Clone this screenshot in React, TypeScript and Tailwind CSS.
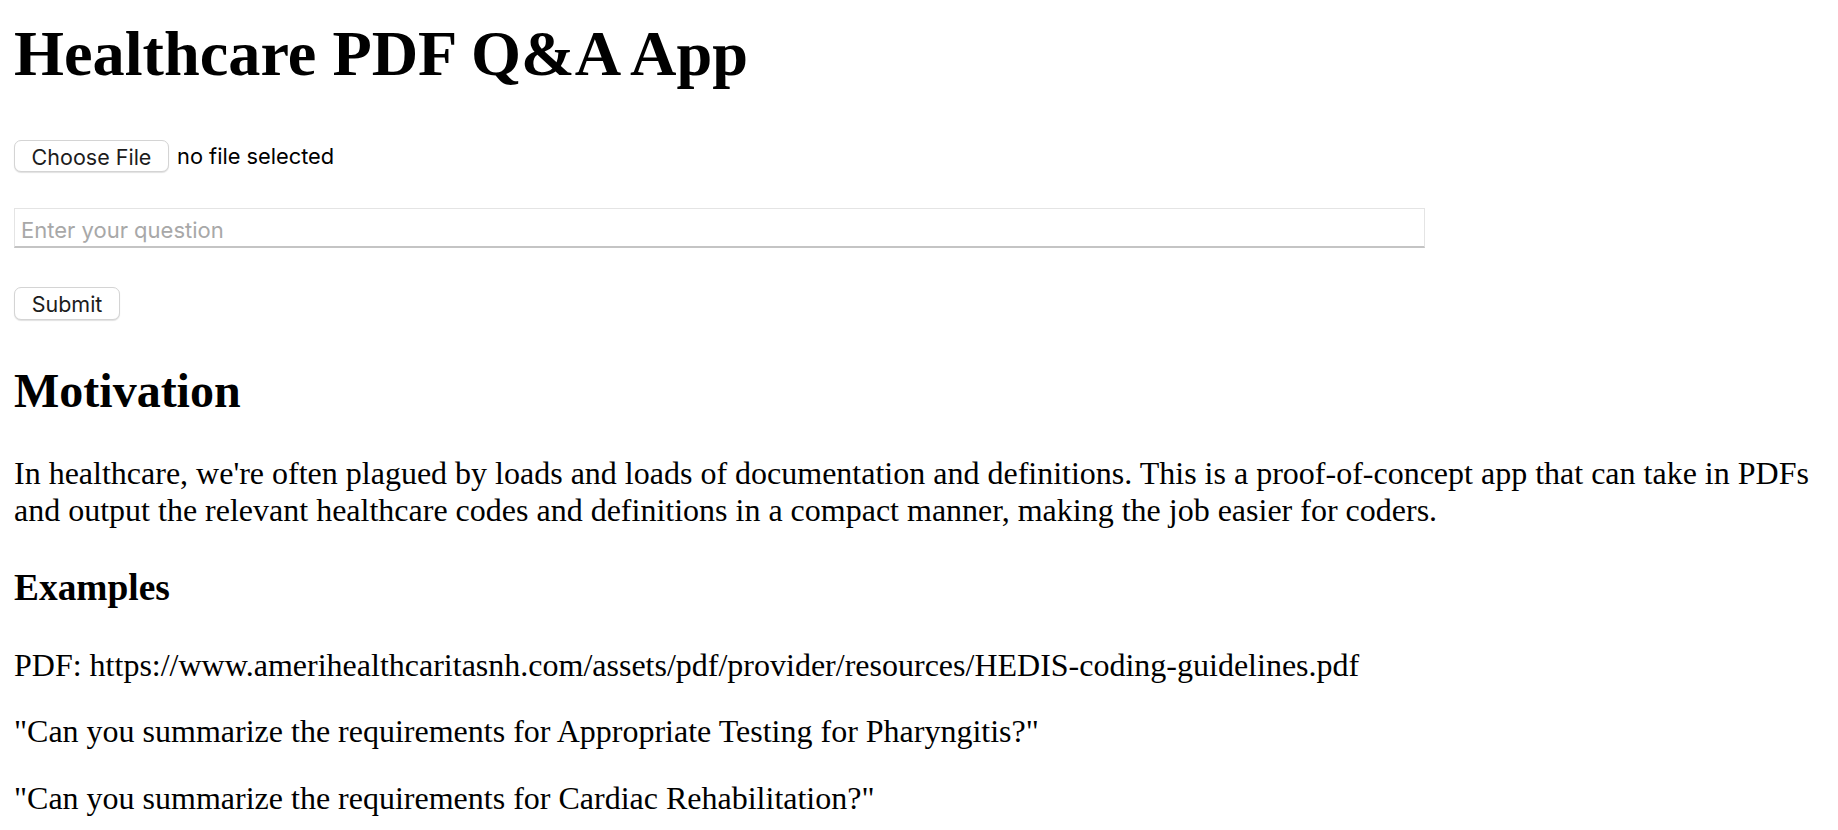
import React from "react";

export default function App() {
  const serif = { fontFamily: '"Liberation Serif", "Times New Roman", serif' };
  return (
    <div className="min-h-screen bg-white text-black px-[14px] pt-[16.5px]" style={serif}>
      <h1 className="text-[64.3px] font-bold leading-[74px] m-0">Healthcare PDF Q&amp;A App</h1>

      <div className="mt-[49px] flex items-center gap-[8px] font-['Inter',sans-serif]">
        <button className="h-[32px] w-[155px] rounded-[7px] border border-[#d4d4d4] bg-white text-[21.5px] text-[#1c1c1c] shadow-[0_1px_1px_rgba(0,0,0,0.12)]">
          Choose File
        </button>
        <span className="text-[21.8px] text-black">no file selected</span>
      </div>

      <div className="mt-[36px]">
        <input
          type="text"
          placeholder="Enter your question"
          className="block h-[40px] w-[1411px] border border-[#e4e4e4] border-b-[#c4c4c4] border-b-2 bg-white px-[6px] pt-[5px] text-[22px] font-['Inter',sans-serif] placeholder:text-[#a8a8a8] outline-none"
        />
      </div>

      <div className="mt-[39px] font-['Inter',sans-serif]">
        <button className="h-[33px] w-[106px] rounded-[7px] border border-[#d4d4d4] bg-white text-[21.5px] text-[#1c1c1c] shadow-[0_1px_1px_rgba(0,0,0,0.12)]">
          Submit
        </button>
      </div>

      <h2 className="mt-[43px] text-[48px] font-bold leading-[55px]">Motivation</h2>

      <p className="mt-[37px] text-[32px] leading-[36.5px]">
        In healthcare, we're often plagued by loads and loads of documentation and definitions. This is a proof-of-concept app that can take in PDFs and output the relevant healthcare codes and definitions in a compact manner, making the job easier for coders.
      </p>

      <h3 className="mt-[38px] text-[37.4px] font-bold leading-[43px]">Examples</h3>

      <p className="mt-[38px] text-[32px] leading-[36.5px]">
        PDF: https://www.amerihealthcaritasnh.com/assets/pdf/provider/resources/HEDIS-coding-guidelines.pdf
      </p>
      <p className="mt-[29.5px] text-[32px] leading-[36.5px]">
        "Can you summarize the requirements for Appropriate Testing for Pharyngitis?"
      </p>
      <p className="mt-[30px] text-[32px] leading-[36.5px]">
        "Can you summarize the requirements for Cardiac Rehabilitation?"
      </p>
    </div>
  );
}
